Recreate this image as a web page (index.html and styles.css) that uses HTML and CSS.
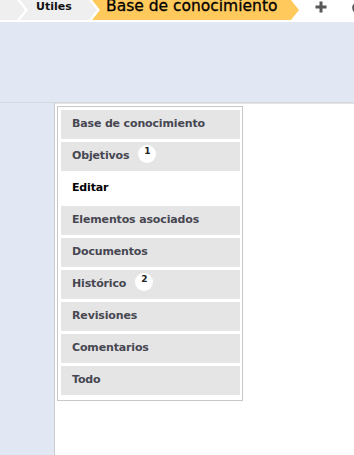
FILE: index.html
```html
<!DOCTYPE html>
<html lang="es">
<head>
<meta charset="utf-8">
<title>Base de conocimiento</title>
<link rel="stylesheet" href="styles.css">
</head>
<body>
<header class="topbar">
  <nav class="crumbs">
    <span class="crumb crumb-prev"></span>
    <span class="crumb crumb-mid">Utiles</span>
    <span class="crumb crumb-current">Base de conocimiento</span>
  </nav>
  <div class="tools">
    <svg class="icon-plus" width="12" height="12" viewBox="0 0 12 12"><path d="M6 0.5V11.5M0.5 6H11.5" stroke="#575757" stroke-width="3" fill="none"/></svg>
    <svg class="icon-circle" width="12" height="14" viewBox="0 0 12 14"><circle cx="7.5" cy="7" r="5" stroke="#575757" stroke-width="2.6" fill="none"/></svg>
  </div>
</header>
<div class="band"></div>
<div class="main">
  <aside class="side"></aside>
  <section class="content">
    <ul class="menu">
      <li class="item">Base de conocimiento</li>
      <li class="item">Objetivos<span class="badge">1</span></li>
      <li class="item active">Editar</li>
      <li class="item">Elementos asociados</li>
      <li class="item">Documentos</li>
      <li class="item">Histórico<span class="badge">2</span></li>
      <li class="item">Revisiones</li>
      <li class="item">Comentarios</li>
      <li class="item">Todo</li>
    </ul>
  </section>
</div>
</body>
</html>
```

FILE: styles.css
```css
html, body {
  margin: 0;
  padding: 0;
  background: #ffffff;
}
body {
  width: 354px;
  height: 455px;
  overflow: hidden;
  display: flex;
  flex-direction: column;
  font-family: "DejaVu Sans", Verdana, sans-serif;
}
.topbar {
  height: 22px;
  flex: none;
  display: flex;
  align-items: flex-start;
  overflow: hidden;
}
.crumbs {
  display: flex;
  height: 20px;
}
.crumb {
  height: 20px;
  box-sizing: border-box;
  display: block;
  white-space: nowrap;
}
.crumb-prev {
  width: 45px;
  margin-left: -20px;
  background: #efefef;
  clip-path: polygon(0 0, calc(100% - 8px) 0, 100% 50%, calc(100% - 8px) 100%, 0 100%);
}
.crumb-mid {
  width: 77px;
  margin-left: -5px;
  background: #efefef;
  clip-path: polygon(0 0, calc(100% - 8px) 0, 100% 50%, calc(100% - 8px) 100%, 0 100%, 8px 50%);
  font-size: 11px;
  font-weight: bold;
  color: #111;
  padding-left: 16px;
  line-height: 13px;
}
.crumb-current {
  width: 207px;
  margin-left: -5px;
  background: #ffc95c;
  clip-path: polygon(0 0, calc(100% - 8px) 0, 100% 50%, calc(100% - 8px) 100%, 0 100%, 8px 50%);
  font-size: 15.5px;
  color: #000;
  -webkit-text-stroke: 0.3px #000;
  padding-left: 14px;
  line-height: 13px;
}
.tools {
  display: flex;
  align-items: flex-start;
  margin-left: 16px;
  padding-top: 1px;
  gap: 24px;
}
.band {
  height: 80px;
  flex: none;
  background: #e1e7f3;
  border-bottom: 1px solid #d4d8df;
}
.main {
  flex: 1;
  display: flex;
  min-height: 0;
}
.side {
  width: 54px;
  flex: none;
  background: #e1e7f3;
  border-right: 1px solid #c9cdd4;
}
.content {
  flex: 1;
  border-top: 1px solid #e4e4e4;
  padding: 2px 0 0 2px;
}
.menu {
  list-style: none;
  margin: 0;
  width: 179px;
  padding: 3px 2px 2px 3px;
  border: 1px solid #c8c8c8;
  background: #fff;
}
.item {
  height: 29px;
  box-sizing: border-box;
  margin-bottom: 3px;
  background: #e5e5e5;
  padding: 0 0 2px 11px;
  line-height: 27px;
  font-size: 11px;
  font-weight: bold;
  color: #474752;
  display: flex;
  align-items: flex-start;
  letter-spacing: -0.15px;
}
.item.active {
  background: #ffffff;
  color: #000;
}
.badge {
  width: 18px;
  height: 18px;
  border-radius: 50%;
  background: #fff;
  margin: 3px 0 0 9px;
  font-size: 9px;
  line-height: 11px;
  padding-top: 1px;
  box-sizing: border-box;
  text-align: center;
  color: #222;
  letter-spacing: 0;
}
```
